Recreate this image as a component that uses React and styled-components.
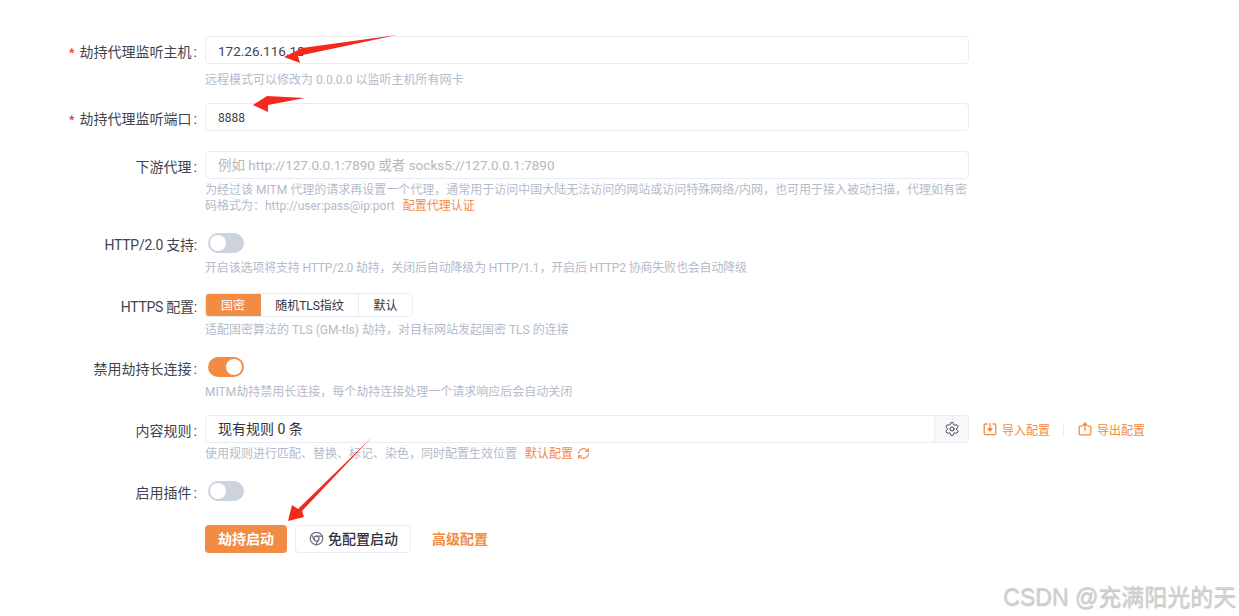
import React from "react";
import styled, { createGlobalStyle } from "styled-components";
import { Chrome, Settings, RefreshCw } from "lucide-react";

const FONT = `Roboto, "Noto Sans CJK SC", sans-serif`;

const Global = createGlobalStyle`
  html, body { margin: 0; padding: 0; background: #fff; }
  body { font-family: ${FONT}; width: 1239px; height: 616px; overflow: hidden; }
`;

const Page = styled.div`
  position: relative;
  width: 1239px;
  height: 616px;
  padding-top: 36px;
  box-sizing: border-box;
  color: #31343f;
`;
const Row = styled.div`
  display: grid;
  grid-template-columns: 197px 764px auto;
  column-gap: 8px;
  margin-top: ${(p) => p.$top || 0}px;
`;
const Label = styled.label`
  box-sizing: border-box;
  font-size: 14px;
  line-height: ${(p) => p.$h || 28}px;
  height: ${(p) => p.$h || 28}px;
  text-align: right;
  white-space: nowrap;
  color: #41444f;
  padding-top: 2px;
  letter-spacing: ${(p) => (p.$tight ? "-0.25px" : "0")};
`;
const Colon = styled.span`
  margin-left: 2px;
`;
const Star = styled.span`
  color: #f5222d;
  font-size: 13px;
  margin-right: 5px;
`;
const Field = styled.div`
  min-width: 0;
`;
const Input = styled.div`
  height: 28px;
  box-sizing: border-box;
  border: 1px solid #eaecf3;
  border-radius: 4px;
  padding: 0 12px;
  line-height: ${(p) => p.$lh || 29}px;
  font-size: ${(p) => p.$size || 13.5}px;
  color: ${(p) => (p.$placeholder ? "#b8b8b8" : "#41444f")};
  white-space: nowrap;
`;
const Help = styled.div`
  font-size: 12px;
  line-height: 16px;
  margin-top: ${(p) => p.$top ?? 7}px;
  color: #b4bbca;
  letter-spacing: ${(p) => (p.$tight ? "-0.17px" : "0")};
`;
const OrangeLink = styled.span`
  color: #f28b44;
  margin-left: 8px;
  svg {
    margin-left: 4px;
    vertical-align: -2px;
  }
`;
const Track = styled.div`
  width: 36px;
  height: 20px;
  margin-left: 3px;
  border-radius: 10px;
  background: ${(p) => (p.$on ? "#f28b44" : "#ccd2de")};
  position: relative;
`;
const Knob = styled.div`
  position: absolute;
  top: 2px;
  left: ${(p) => (p.$on ? 18 : 2)}px;
  width: 16px;
  height: 16px;
  border-radius: 50%;
  background: #fff;
`;
const Segments = styled.div`
  display: inline-flex;
  height: 24px;
  box-sizing: border-box;
  border: 1px solid #eaecf3;
  border-radius: 4px;
  overflow: hidden;
  vertical-align: top;
`;
const Segment = styled.div`
  font-size: 12px;
  width: ${(p) => p.$w}px;
  text-align: center;
  box-sizing: border-box;
  background: ${(p) => (p.$active ? "#f28b44" : "#fff")};
  color: ${(p) => (p.$active ? "#fff" : "#31343f")};
  margin: ${(p) => (p.$active ? "-1px 0 -1px -1px" : "0")};
  line-height: ${(p) => (p.$active ? 26 : 24)}px;
  border-left: ${(p) => (p.$divided ? "1px solid #eaecf3" : "none")};
`;
const RuleBox = styled.div`
  display: flex;
  height: 28px;
  box-sizing: border-box;
  border: 1px solid #eaecf3;
  border-radius: 4px;
  overflow: hidden;
`;
const RuleText = styled.div`
  flex: 1;
  padding: 0 12px;
  font-size: 14px;
  line-height: 26px;
`;
const Addon = styled.div`
  width: 33px;
  background: #f8f8fa;
  border-left: 1px solid #eaecf3;
  display: flex;
  align-items: center;
  justify-content: center;
  color: #41444f;
`;
const Actions = styled.div`
  display: flex;
  align-items: center;
  height: 28px;
  font-size: 12px;
  color: #f28b44;
  padding-left: 6px;
`;
const ActionLink = styled.span`
  display: inline-flex;
  align-items: center;
  gap: 5px;
  white-space: nowrap;
`;
const Divider = styled.span`
  width: 1px;
  height: 13px;
  background: #eaecf3;
  margin: 0 14px 0 13px;
`;
const Buttons = styled.div`
  display: flex;
  align-items: center;
  height: 28px;
  grid-column: 2;
`;
const Primary = styled.button`
  width: 82px;
  height: 28px;
  border: 0;
  border-radius: 4px;
  background: #f28b44;
  color: #fff;
  font: 700 14px ${FONT};
  padding: 0 0 2px;
`;
const Secondary = styled.button`
  width: 116px;
  height: 28px;
  margin-left: 8px;
  box-sizing: border-box;
  border: 1px solid #eaecf3;
  border-radius: 4px;
  background: #fff;
  color: #31343f;
  font: 500 14px ${FONT};
  padding: 0 0 2px 1px;
  display: flex;
  align-items: center;
  justify-content: center;
  gap: 4px;
`;
const TextButton = styled.span`
  margin-left: 21px;
  padding-bottom: 2px;
  color: #f28b44;
  font-weight: 700;
  font-size: 14px;
`;
const Arrows = styled.svg`
  position: absolute;
  left: 0;
  top: 0;
  pointer-events: none;
`;
const Watermark = styled.div`
  position: absolute;
  right: 3px;
  top: 581px;
  font: 23px/32px "Liberation Sans", "Noto Sans CJK SC", sans-serif;
  color: #d2d2d2;
  text-shadow: 0.5px 0.5px 1px rgba(0, 0, 0, 0.25);
  white-space: nowrap;
`;

const ImportIcon = () => (
  <svg width="14" height="14" viewBox="0 0 14 14" fill="none" stroke="#f28b44" strokeWidth="1.3" strokeLinecap="round" strokeLinejoin="round">
    <path d="M4 2H2.200a1 1 0 0 0-1 1v8.600a1 1 0 0 0 1 1h9.600a1 1 0 0 0 1-1V3a1 1 0 0 0-1-1H10" />
    <path d="M7 1.500v6.500" />
    <path d="M5 6.600h4L7 9z" fill="#f28b44" />
  </svg>
);
const ExportIcon = () => (
  <svg width="14" height="14" viewBox="0 0 14 14" fill="none" stroke="#f28b44" strokeWidth="1.3" strokeLinecap="round" strokeLinejoin="round">
    <path d="M4 4.200H2.200a1 1 0 0 0-1 1v6.600a1 1 0 0 0 1 1h9.600a1 1 0 0 0 1-1V5.200a1 1 0 0 0-1-1H10" />
    <path d="M7 8.500V2" />
    <path d="M5 3.100h4L7 .9z" fill="#f28b44" />
  </svg>
);

export default function App() {
  return (
    <Page>
      <Global />
      <Row>
        <Label><Star>*</Star>劫持代理监听主机<Colon>:</Colon></Label>
        <Field>
          <Input>172.26.116.18</Input>
          <Help $top={8}>远程模式可以修改为 0.0.0.0 以监听主机所有网卡</Help>
        </Field>
      </Row>
      <Row $top={15}>
        <Label><Star>*</Star>劫持代理监听端口<Colon>:</Colon></Label>
        <Field><Input $size={12}>8888</Input></Field>
      </Row>
      <Row $top={20}>
        <Label>下游代理<Colon>:</Colon></Label>
        <Field>
          <Input $placeholder $lh={27}>例如 http://127.0.0.1:7890 或者 socks5://127.0.0.1:7890</Input>
          <Help $top={3}>
            为经过该 MITM 代理的请求再设置一个代理，通常用于访问中国大陆无法访问的网站或访问特殊网络/内网，也可用于接入被动扫描，代理如有密码格式为：http://user:pass@ip:port
            <OrangeLink>配置代理认证</OrangeLink>
          </Help>
        </Field>
      </Row>
      <Row $top={19}>
        <Label $h={20} $tight>HTTP/2.0 支持:</Label>
        <Field>
          <Track><Knob /></Track>
          <Help $top={7} $tight>开启该选项将支持 HTTP/2.0 劫持，关闭后自动降级为 HTTP/1.1，开启后 HTTP2 协商失败也会自动降级</Help>
        </Field>
      </Row>
      <Row $top={17}>
        <Label $h={24} $tight>HTTPS 配置:</Label>
        <Field>
          <Segments>
            <Segment $active $w={56}>国密</Segment>
            <Segment $w={97}>随机TLS指纹</Segment>
            <Segment $divided $w={54}>默认</Segment>
          </Segments>
          <Help $top={5}>适配国密算法的 TLS (GM-tls) 劫持，对目标网站发起国密 TLS 的连接</Help>
        </Field>
      </Row>
      <Row $top={19}>
        <Label $h={20}>禁用劫持长连接<Colon>:</Colon></Label>
        <Field>
          <Track $on><Knob $on /></Track>
          <Help $top={7}>MITM劫持禁用长连接，每个劫持连接处理一个请求响应后会自动关闭</Help>
        </Field>
      </Row>
      <Row $top={15}>
        <Label>内容规则<Colon>:</Colon></Label>
        <Field>
          <RuleBox>
            <RuleText>现有规则 0 条</RuleText>
            <Addon><Settings size={16} strokeWidth={1.5} /></Addon>
          </RuleBox>
          <Help $top={3}>
            使用规则进行匹配、替换、标记、染色，同时配置生效位置
            <OrangeLink>默认配置<RefreshCw size={13} strokeWidth={2} /></OrangeLink>
          </Help>
        </Field>
        <Actions>
          <ActionLink><ImportIcon />导入配置</ActionLink>
          <Divider />
          <ActionLink><ExportIcon />导出配置</ActionLink>
        </Actions>
      </Row>
      <Row $top={19}>
        <Label $h={20}>启用插件<Colon>:</Colon></Label>
        <Field><Track><Knob /></Track></Field>
      </Row>
      <Row $top={24}>
        <Buttons>
          <Primary>劫持启动</Primary>
          <Secondary><Chrome size={15} color="#6b7080" strokeWidth={2} />免配置启动</Secondary>
          <TextButton>高级配置</TextButton>
        </Buttons>
      </Row>
      <Arrows width="1239" height="616" viewBox="0 0 1239 616">
        <polygon fill="#f5281e" points="397,35 302,48 284,57 300,63 298,56" />
        <polygon fill="#f5281e" points="305,98 267,96 253,105 268,112 268,105" />
        <polygon fill="#f5281e" points="372,437 298,509 292,505 288,521 304,517 302,511" />
      </Arrows>
      <Watermark>CSDN @充满阳光的天</Watermark>
    </Page>
  );
}
